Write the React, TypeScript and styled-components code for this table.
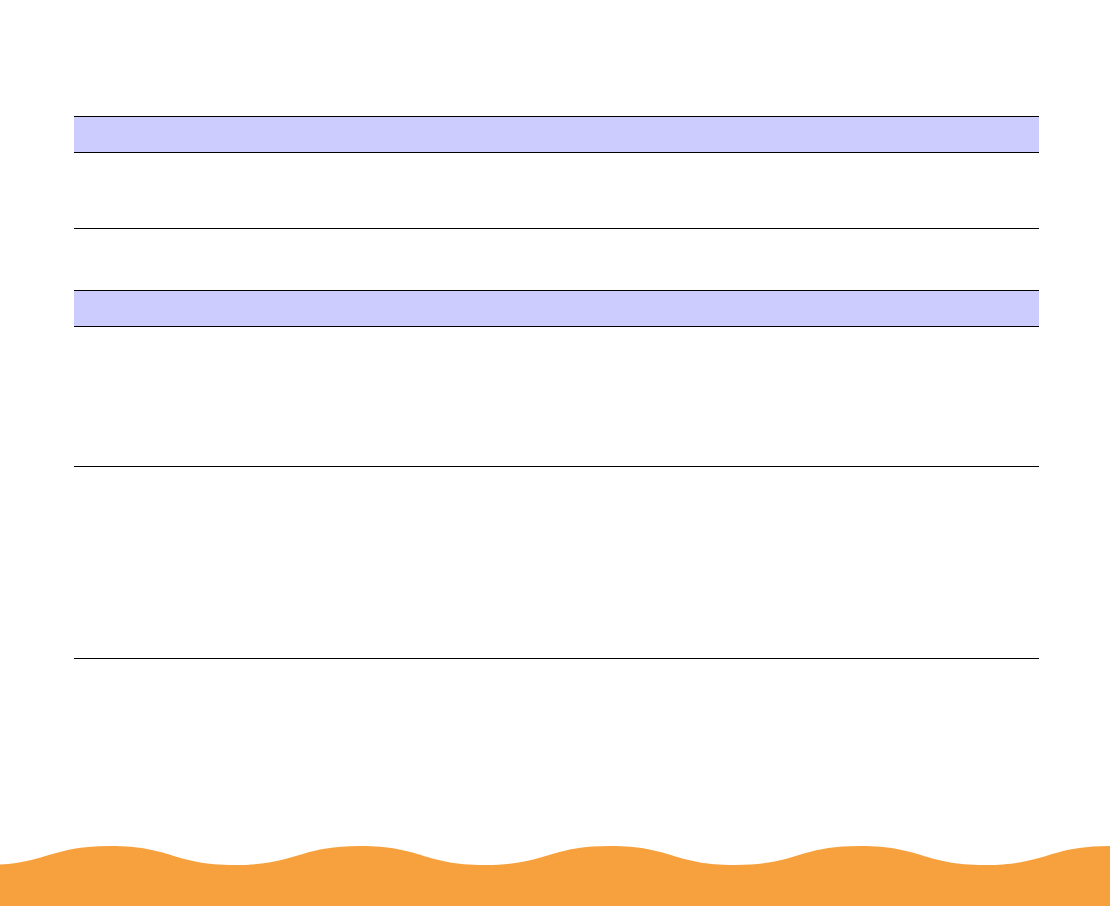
import styled, { createGlobalStyle } from "styled-components";

const GlobalStyle = createGlobalStyle`
    html, body {
        margin: 0;
        padding: 0;
        background: #fff;
        font-family: "Liberation Sans", Arial, sans-serif;
    }
`

const Page = styled.div`
    min-height: 100vh;
    display: flex;
    flex-direction: column;
`

const Content = styled.main`
    padding: 116px 0 0 74px;
    display: flex;
    flex-direction: column;
    gap: 61px;
`

const Table = styled.div`
    width: 965px;
    border-top: 1px solid #000;
`

const HeaderRow = styled.div`
    height: 35px;
    background-color: #ccccff;
    border-bottom: 1px solid #000;
`

const Row = styled.div<{ $h: number }>`
    height: ${p => p.$h}px;
    border-bottom: 1px solid #000;
`

const Footer = styled.footer`
    margin-top: auto;
    height: 62px;
    line-height: 0;
`

const ORANGE = "#f7a13e"

function wavePath() {
    const low = 21, high = 2, half = 125
    let d = `M-15,62 L-15,${low}`
    let x = -15
    let up = true
    while (x < 1110) {
        const nx = x + half
        const y0 = up ? low : high
        const y1 = up ? high : low
        d += ` C${x + 62},${y0} ${x + 63},${y1} ${nx},${y1}`
        x = nx
        up = !up
    }
    d += ` L${x},62 Z`
    return d
}

export default function App() {
    return (
        <Page>
            <GlobalStyle />
            <Content>
                <Table>
                    <HeaderRow />
                    <Row $h={75} />
                </Table>
                <Table>
                    <HeaderRow />
                    <Row $h={139} />
                    <Row $h={191} />
                </Table>
            </Content>
            <Footer>
                <svg width="1110" height="62" viewBox="0 0 1110 62">
                    <path d={wavePath()} fill={ORANGE} />
                </svg>
            </Footer>
        </Page>
    )
}
